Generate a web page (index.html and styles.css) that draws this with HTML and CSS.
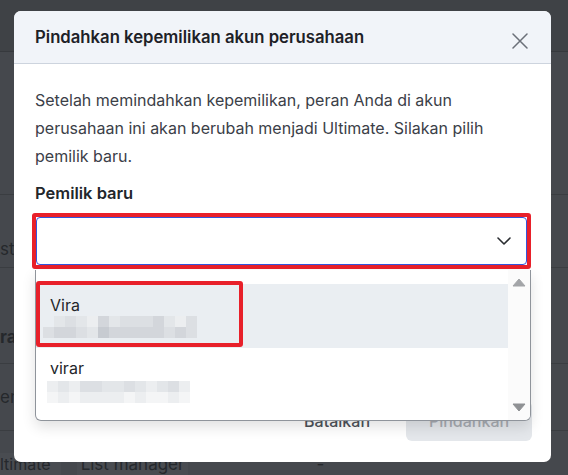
FILE: index.html
```html
<!DOCTYPE html>
<html lang="id">
<head>
<meta charset="utf-8">
<title>Pindahkan kepemilikan</title>
<link rel="stylesheet" href="styles.css">
</head>
<body>
<div class="page">
  <div class="page-top"></div>
  <div class="row row-a"></div>
  <div class="row row-b"><span class="cell">sta</span></div>
  <div class="row row-c"><span class="cell bold">ra</span></div>
  <div class="row row-d"><span class="cell">en</span></div>
  <div class="row row-e">
    <span class="cell c-role">ltimate</span>
    <span class="cell c-list">List manager</span>
    <span class="cell c-dash">-</span>
  </div>
</div>

<div class="modal">
  <div class="modal-header">
    <h2 class="modal-title">Pindahkan kepemilikan akun perusahaan</h2>
    <button class="close-btn" aria-label="Tutup">
      <svg width="16" height="16" viewBox="0 0 16 16"><path d="M1 1 L15 15 M15 1 L1 15" stroke="#6b7079" stroke-width="1.5" fill="none" stroke-linecap="round"/></svg>
    </button>
  </div>
  <div class="modal-body">
    <p class="desc">Setelah memindahkan kepemilikan, peran Anda di akun perusahaan ini akan berubah menjadi Ultimate. Silakan pilih pemilik baru.</p>
    <div class="label">Pemilik baru</div>
    <div class="field">
      <div class="select">
        <svg width="14" height="8" viewBox="0 0 14 8"><path d="M1 1 L7 7 L13 1" stroke="#2a2d31" stroke-width="1.6" fill="none" stroke-linecap="round" stroke-linejoin="round"/></svg>
      </div>
      <div class="dropdown">
        <div class="options">
          <div class="option active">
            <div class="opt-name">Vira</div>
            <div class="pix pix-1">
              <div class="pix-row"><i class="s0"></i><i class="s3"></i><i class="s4"></i><i class="s3"></i><i class="s2"></i><i class="s5"></i><i class="s3"></i><i class="s4"></i><i class="s4"></i><i class="s4"></i><i class="s5"></i><i class="s3"></i><i class="s2"></i><i class="s4"></i></div>
              <div class="pix-row"><i class="s4"></i><i class="s5"></i><i class="s5"></i><i class="s4"></i><i class="s3"></i><i class="s6"></i><i class="s5"></i><i class="s5"></i><i class="s5"></i><i class="s5"></i><i class="s5"></i><i class="s4"></i><i class="s5"></i><i class="s4"></i></div>
            </div>
            <div class="mark"></div>
          </div>
          <div class="option">
            <div class="opt-name">virar</div>
            <div class="pix pix-2">
              <div class="pix-row"><i class="s2"></i><i class="s3"></i><i class="s2"></i><i class="s4"></i><i class="s4"></i><i class="s3"></i><i class="s3"></i><i class="s4"></i><i class="s3"></i><i class="s2"></i><i class="s3"></i><i class="s4"></i><i class="s2"></i></div>
              <div class="pix-row"><i class="s1"></i><i class="s2"></i><i class="s1"></i><i class="s2"></i><i class="s2"></i><i class="s2"></i><i class="s2"></i><i class="s1"></i><i class="s2"></i><i class="s1"></i><i class="s1"></i><i class="s2"></i><i class="s1"></i></div>
            </div>
          </div>
        </div>
        <div class="scrollbar">
          <svg width="14" height="9" viewBox="0 0 14 9"><path d="M7 1 L13 8 L1 8 Z" fill="#a3a5a8" stroke="#a3a5a8" stroke-width="1" stroke-linejoin="round"/></svg>
          <svg width="14" height="9" viewBox="0 0 14 9"><path d="M1 1 L13 1 L7 8 Z" fill="#8f9194" stroke="#8f9194" stroke-width="1" stroke-linejoin="round"/></svg>
        </div>
      </div>
    </div>
  </div>
  <div class="modal-footer">
    <button class="btn btn-cancel">Batalkan</button>
    <button class="btn btn-primary">Pindahkan</button>
  </div>
</div>
</body>
</html>
```

FILE: styles.css
```css
* { box-sizing: border-box; }

body {
  margin: 0;
  width: 568px;
  height: 475px;
  overflow: hidden;
  position: relative;
  background: #45484d;
  font-family: Inter, "Noto Sans", sans-serif;
}

/* dimmed page behind the dialog */
.page {
  display: flex;
  flex-direction: column;
  height: 475px;
}
.page-top {
  height: 52px;
  background: #3f4246;
  border-bottom: 1px solid #36393d;
}
.row {
  border-bottom: 1px solid #3a3d41;
  display: flex;
  align-items: flex-start;
  color: #25282c;
  font-size: 17px;
  line-height: 22px;
}
.row-a { height: 145px; }
.row-b { height: 73px; padding-top: 43px; }
.row-c { height: 97px; padding-top: 58px; }
.row-d { height: 67px; padding-top: 22px; }
.row-e { flex: 1; border-bottom: none; padding-top: 22px; }
.bold { font-weight: 700; }
.c-role { background: #494c51; padding: 0 10px 0 0; font-size: 16px; }
.c-list { margin-left: 16px; background: #494c51; padding: 0 4px; }
.c-dash { margin-left: 128px; }

/* dialog */
.modal {
  position: absolute;
  left: 14px;
  top: 11px;
  width: 537px;
  height: 451px;
  background: #ffffff;
  border-radius: 7px;
  display: flex;
  flex-direction: column;
}
.modal-header {
  height: 53px;
  background: #f1f4f9;
  border-bottom: 1px solid #cdd4de;
  border-radius: 7px 7px 0 0;
  display: flex;
  align-items: center;
  justify-content: space-between;
  padding: 0 23px 0 21px;
}
.modal-title {
  margin: 0;
  font-size: 16.7px;
  font-weight: 600;
  color: #1d2127;
  line-height: 22px;
}
.close-btn {
  border: none;
  background: none;
  padding: 0;
  margin-top: 8px;
  width: 16px;
  height: 16px;
  display: flex;
}

.modal-body {
  padding: 22px 20px 0 21px;
}
.desc {
  margin: 0;
  font-size: 16px;
  line-height: 28px;
  color: #3b4048;
}
.label {
  margin-top: 12px;
  font-size: 16.5px;
  font-weight: 600;
  line-height: 22px;
  color: #22262b;
}
.field {
  position: relative;
  margin-top: 9px;
  margin-left: -3px;
  width: 499px;
  height: 56px;
  border: 4px solid #e8202a;
  border-radius: 3px;
}
.select {
  height: 48px;
  border: 1px solid #3355dd;
  border-radius: 4px;
  background: #fff;
  display: flex;
  align-items: center;
  justify-content: flex-end;
  padding-right: 15px;
}

.dropdown {
  position: absolute;
  top: calc(100% + 5px);
  left: -1px;
  width: 496px;
  height: 151px;
  background: #fff;
  border: 1px solid #8f949b;
  border-top: none;
  border-radius: 0 0 6px 6px;
  box-shadow: 0 6px 14px rgba(0, 0, 0, 0.12);
  display: flex;
  overflow: hidden;
  z-index: 2;
}
.options {
  flex: 1;
  padding-top: 14px;
}
.option {
  position: relative;
  height: 64px;
  padding: 10px 14px 0;
}
.option + .option { padding-top: 9px; }
.option.active { background: #eaeef2; }
.opt-name {
  font-size: 16px;
  line-height: 22px;
  color: #23262b;
}
.pix { display: flex; flex-direction: column; }
.pix-1 { margin-left: -7px; }
.pix-2 { margin-left: -3px; margin-top: 2px; }
.pix-row { display: flex; }
.pix-row i { width: 11px; height: 11px; display: block; }
.s0 { background: transparent; }
.s1 { background: #f4f5f6; }
.s2 { background: #eceef0; }
.s3 { background: #e3e6e9; }
.s4 { background: #dcdfe3; }
.s5 { background: #d3d6db; }
.s6 { background: #c7cbd1; }

.mark {
  position: absolute;
  top: -3px;
  left: 0;
  width: 207px;
  height: 66px;
  border: 4px solid #e8202a;
  border-radius: 3px;
}

.scrollbar {
  width: 22px;
  background: #fbfbfb;
  display: flex;
  flex-direction: column;
  align-items: center;
  justify-content: space-between;
  padding: 8px 0 8px;
}

.modal-footer {
  margin-top: auto;
  display: flex;
  justify-content: flex-end;
  align-items: center;
  gap: 20px;
  padding: 0 19px 21px;
}
.btn {
  border: none;
  font-family: inherit;
  font-size: 16px;
  font-weight: 500;
  height: 40px;
  border-radius: 6px;
}
.btn-cancel {
  background: none;
  color: #4d5259;
  padding: 0 16px;
}
.btn-primary {
  width: 126px;
  background: #e4e7eb;
  color: #a7abb1;
}
```
